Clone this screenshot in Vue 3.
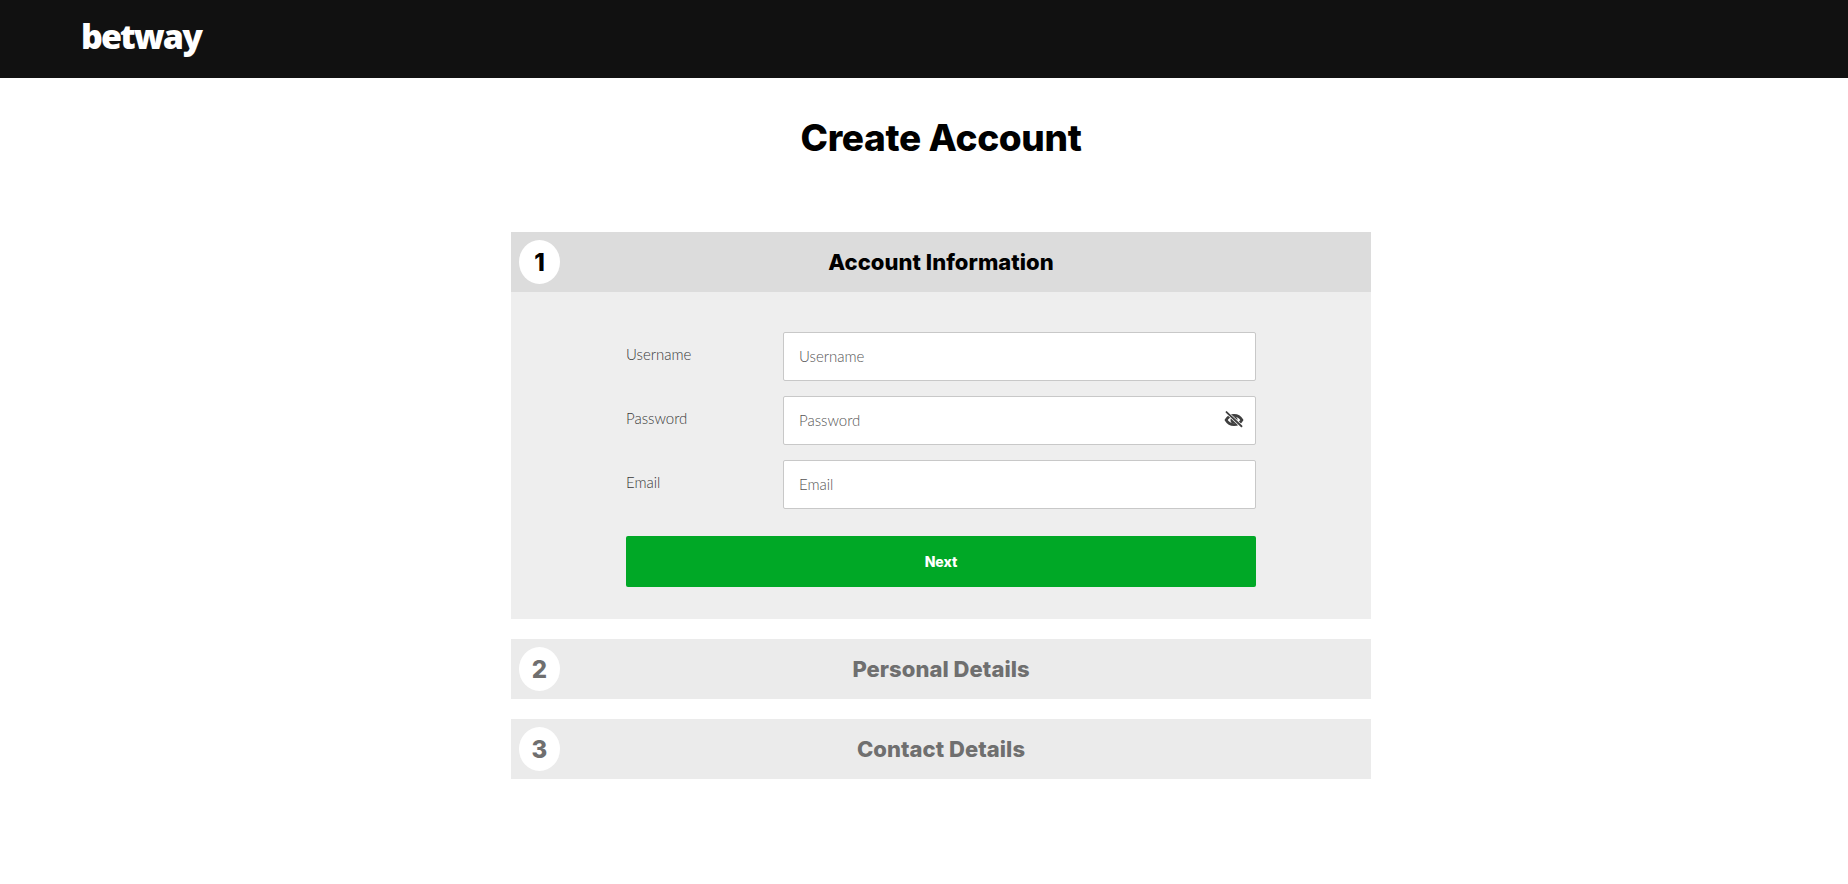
<script setup>
const fields = [
  { name: 'Username', eye: false },
  { name: 'Password', eye: true },
  { name: 'Email', eye: false },
]
</script>

<template>
  <div class="page">
    <header class="topbar">
      <span class="logo">betway</span>
    </header>
    <main class="main">
      <h1 class="title">Create Account</h1>
      <section class="step">
        <div class="step-head active">
          <span class="num">1</span>
          <h2>Account Information</h2>
        </div>
        <form class="step-body" @submit.prevent>
          <div v-for="f in fields" :key="f.name" class="row">
            <label class="label">{{ f.name }}</label>
            <div class="field">
              <input class="input" :placeholder="f.name" :type="f.eye ? 'password' : 'text'" />
              <svg v-if="f.eye" class="eye" viewBox="0 0 24 24" aria-hidden="true">
                <path fill="none" stroke="#3f3f3f" stroke-width="3.200" d="M2.500 12c2.200-3.800 5.600-5.600 9.500-5.600s7.300 1.800 9.500 5.600c-2.200 3.800-5.600 5.600-9.500 5.600s-7.300-1.800-9.500-5.600z" />
                <circle cx="12" cy="12" r="4.200" fill="#3f3f3f" />
                <path stroke="#fff" stroke-width="3.800" d="M3 2.500l18 17" />
                <path stroke="#3f3f3f" stroke-width="2.200" stroke-linecap="round" d="M3 2.500l18 17" />
              </svg>
            </div>
          </div>
          <button class="next" type="submit">Next</button>
        </form>
      </section>
      <section class="step">
        <div class="step-head">
          <span class="num">2</span>
          <h2>Personal Details</h2>
        </div>
      </section>
      <section class="step">
        <div class="step-head">
          <span class="num">3</span>
          <h2>Contact Details</h2>
        </div>
      </section>
    </main>
  </div>
</template>

<style>
html, body { margin: 0; background: #fff; }
</style>

<style scoped>
.page { min-height: 884px; font-family: Inter, "Liberation Sans", sans-serif; }
.topbar {
  height: 78px;
  background: #111;
  padding-left: 81px;
  display: flex;
  align-items: center;
  box-sizing: border-box;
}
.logo {
  font-family: "Open Sans", sans-serif;
  font-weight: 800;
  font-size: 34px;
  line-height: 34px;
  letter-spacing: -1.9px;
  color: #fff;
  position: relative;
  top: -3px;
}
.main {
  width: 860px;
  margin: 0 auto;
  position: relative;
  left: 17px;
}
.title {
  margin: 0;
  padding-top: 37px;
  height: 154px;
  box-sizing: border-box;
  font-size: 37px;
  line-height: 46px;
  font-weight: 800;
  letter-spacing: -0.35px;
  color: #000;
  text-align: center;
}
.step { margin-bottom: 20px; }
.step-head {
  height: 60px;
  background: #ebebeb;
  display: flex;
  align-items: center;
  justify-content: center;
  position: relative;
  color: #6f6f6f;
}
.step-head.active { background: #dcdcdc; color: #000; }
.step-head h2 {
  margin: 0;
  font-size: 22px;
  font-weight: 800;
  line-height: 28px;
  letter-spacing: 0.05px;
}
.num {
  position: absolute;
  left: 8px;
  top: 8px;
  width: 41px;
  height: 44px;
  border-radius: 50%;
  background: #fff;
  display: flex;
  align-items: center;
  justify-content: center;
  font-size: 24px;
  font-weight: 800;
}
.step-body {
  background: #eee;
  height: 327px;
  box-sizing: border-box;
  padding: 40px 115px 0;
  display: flex;
  flex-direction: column;
}
.row {
  display: flex;
  height: 49px;
  margin-bottom: 15px;
}
.label {
  width: 157px;
  flex: none;
  font-family: Lato, sans-serif;
  font-weight: 300;
  font-size: 15px;
  line-height: 22px;
  padding-top: 11px;
  box-sizing: border-box;
  color: #3a3a3a;
}
.field { flex: 1; position: relative; }
.input {
  width: 100%;
  height: 49px;
  box-sizing: border-box;
  border: 1px solid #c8c8c8;
  border-radius: 2px;
  background: #fff;
  padding: 0 15px 1px;
  font-family: Lato, sans-serif;
  font-weight: 300;
  font-size: 15px;
  outline: none;
}
.input::placeholder { color: #555; opacity: 1; }
.eye {
  position: absolute;
  right: 12px;
  top: 14px;
  width: 20px;
  height: 20px;
}
.next {
  margin-top: 12px;
  height: 51px;
  border: none;
  border-radius: 2px;
  background: #00a826;
  color: #fff;
  font-family: Inter, sans-serif;
  font-weight: 800;
  font-size: 14px;
}
</style>
